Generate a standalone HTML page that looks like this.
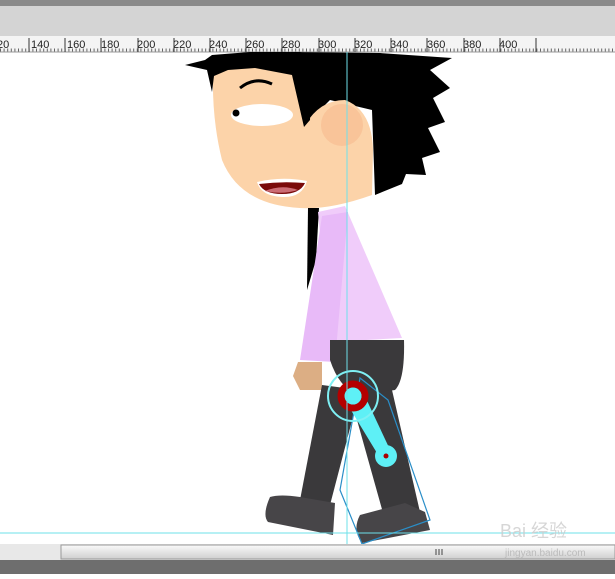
<!DOCTYPE html>
<html><head><style>
body{margin:0;width:615px;height:574px;overflow:hidden;background:#fff;font-family:"Liberation Sans",sans-serif}
</style></head><body>
<svg width="615" height="574" viewBox="0 0 615 574" xmlns="http://www.w3.org/2000/svg">
<rect x="0" y="0" width="615" height="6" fill="#8a8a8a"/>
<rect x="0" y="6" width="615" height="30" fill="#d4d4d4"/>
<rect x="0" y="36" width="615" height="16" fill="#f4f4f4"/>
<line x1="0" y1="52" x2="615" y2="52" stroke="#999"/>
<g font-size="11" fill="#222" font-family="Liberation Sans,sans-serif">
<text x="-3" y="48">20</text>
<text x="31" y="48">140</text><text x="67" y="48">160</text><text x="101" y="48">180</text><text x="137" y="48">200</text><text x="173" y="48">220</text><text x="209" y="48">240</text><text x="246" y="48">260</text><text x="282" y="48">280</text><text x="318" y="48">300</text><text x="354" y="48">320</text><text x="390" y="48">340</text><text x="427" y="48">360</text><text x="463" y="48">380</text><text x="499" y="48">400</text>
</g>
<g stroke="#333" stroke-width="1">
<path d="M29 38V52M65 38V52M101 38V52M138 38V52M174 38V52M210 38V52M246 38V52M282 38V52M319 38V52M355 38V52M391 38V52M427 38V52M464 38V52M500 38V52M536 38V52"/>
</g>
<path d="M0 50H615" stroke="#666" stroke-width="3" stroke-dasharray="1 2.6"/>
<!-- hair back -->
<polygon fill="#000" points="285,52 380,53 452,58 430,70 450,88 433,98 445,122 428,128 440,152 422,158 426,175 406,174 402,184 375,195 372,110 330,100 305,125 292,60"/>
<!-- face -->
<path fill="#fcd3a9" d="M213,75 Q214,60 240,58 L292,58 Q300,100 305,125 Q320,100 345,100 Q372,110 373,150 L372,195 Q330,210 300,208 Q240,205 222,160 Q212,120 213,75 Z"/>
<!-- hair front -->
<polygon fill="#000" points="185,65 205,60 212,55 250,52 300,52 312,55 310,120 304,127 292,75 255,68 228,70 214,76 212,92 207,70"/>
<circle cx="342" cy="125" r="21" fill="#f8c095" opacity="0.8"/>
<!-- eye -->
<ellipse cx="262" cy="115" rx="31" ry="11" fill="#fff"/>
<circle cx="236" cy="113" r="3.5" fill="#000"/>
<path d="M240 88 Q255 76 272 84" stroke="#000" stroke-width="3" fill="none"/>
<!-- mouth -->
<path d="M257 182 Q282 176 307 181 Q302 198 282 197 Q261 196 257 182Z" fill="#fff"/>
<path d="M259 184 Q282 181 305 183 Q300 194 282 194 Q264 194 259 184Z" fill="#7a0a0a"/>
<path d="M265 191 Q282 184 298 190 Q282 195 265 191Z" fill="#cc6c74"/>
<!-- tie -->
<polygon fill="#000" points="308,208 319,208 316,260 307,290"/>
<!-- shirt -->
<polygon fill="#f0ccfa" points="318,212 345,206 402,338 330,342"/>
<polygon fill="#e8baf8" points="322,216 348,212 335,362 300,360"/>
<!-- hand -->
<polygon fill="#dcae84" points="298,362 322,362 322,390 300,390 293,376"/>
<!-- pants -->
<path fill="#3a393b" d="M330,340 L404,340 Q405,380 395,390 L360,395 Q340,390 330,360Z"/>
<polygon fill="#3a393b" points="322,385 360,390 330,505 300,500"/>
<polygon fill="#3a393b" points="350,395 392,390 420,512 385,520"/>
<path fill="#474548" d="M270,497 Q280,494 300,497 L335,503 L333,535 L268,522 Q262,515 270,497Z"/>
<path fill="#474548" d="M360,515 L405,503 L425,512 L430,530 L362,543 Q352,530 360,515Z"/>
<!-- rig -->
<polygon fill="none" stroke="#2a8ec8" stroke-width="1.2" points="360,378 388,400 430,520 362,544 340,490"/>
<polygon fill="#5ef0f6" points="346,402 362,390 392,454 380,458"/>
<circle cx="353" cy="396" r="25" fill="none" stroke="#7ff0f4" stroke-width="2"/>
<circle cx="353" cy="396" r="12" fill="none" stroke="#b40000" stroke-width="7"/>
<circle cx="353" cy="396" r="8.5" fill="#5ef0f6"/>
<circle cx="386" cy="456" r="11" fill="#5ef0f6"/>
<circle cx="386" cy="456" r="2.5" fill="#a00"/>
<line x1="347" y1="52" x2="347" y2="545" stroke="#6ee0ea" stroke-width="1"/>
<line x1="0" y1="533" x2="615" y2="533" stroke="#6ee0ea" stroke-width="1"/>
<!-- scrollbar -->
<defs><linearGradient id="g" x1="0" y1="0" x2="0" y2="1"><stop offset="0" stop-color="#fafafa"/><stop offset="1" stop-color="#cfcfcf"/></linearGradient></defs>
<rect x="0" y="544" width="615" height="16" fill="#e8e8e8"/>
<rect x="61" y="545" width="554" height="14" fill="url(#g)" stroke="#999"/>
<path d="M436 549V555M439 549V555M442 549V555" stroke="#444"/>
<rect x="0" y="560" width="615" height="14" fill="#6e6e6e"/>
<text x="500" y="537" font-size="18" fill="#ccc" font-family="Liberation Sans,'Noto Sans CJK SC',sans-serif" opacity="0.8">Bai 经验</text>
<text x="505" y="556" font-size="10" fill="#bbb">jingyan.baidu.com</text>
</svg>
</body></html>
